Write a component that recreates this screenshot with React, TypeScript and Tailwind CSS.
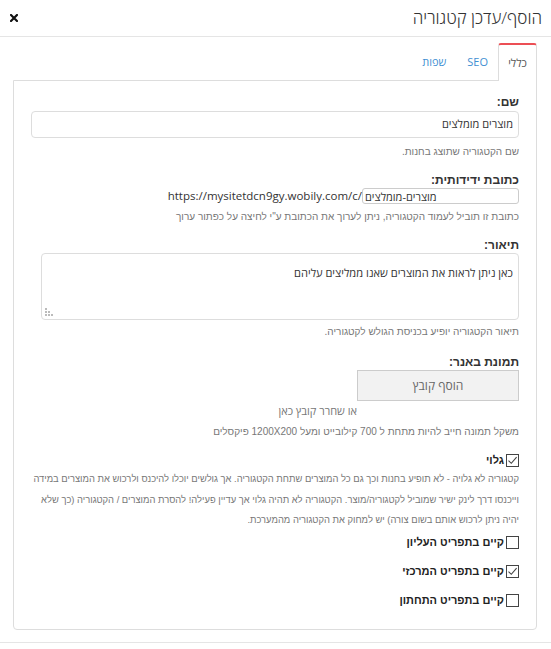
import React from "react"

const os = "font-['Open_Sans','Liberation_Sans',sans-serif]"
const ar = "font-['Liberation_Sans',Arial,sans-serif]"

function Box({ checked }: { checked?: boolean }) {
  return (
    <svg width="13" height="13" viewBox="0 0 13 13" className="shrink-0">
      <rect x="0.5" y="0.5" width="12" height="12" fill="#fff" stroke="#444" />
      {checked && <path d="M2.5 6.6 L5.3 9.3 L10.6 3.2" fill="none" stroke="#444" strokeWidth="1.1" />}
    </svg>
  )
}

function Label({ children, className = "" }: { children: React.ReactNode; className?: string }) {
  return <div className={`${ar} text-[12px] leading-[16px] font-bold text-[#333] ${className}`}>{children}</div>
}

function Help({ children, className = "" }: { children: React.ReactNode; className?: string }) {
  return <div className={`${ar} text-[10px] leading-[14px] text-[#777] whitespace-nowrap ${className}`}>{children}</div>
}

function MenuCheck({ label, checked, className = "" }: { label: string; checked?: boolean; className?: string }) {
  return (
    <div className={`flex items-center gap-[2px] h-[16px] ${className}`}>
      <Box checked={checked} />
      <span className={`${ar} text-[11px] font-bold text-[#222]`}>{label}</span>
    </div>
  )
}

export default function App() {
  return (
    <div dir="rtl" className="w-[551px] h-[649px] bg-white flex flex-col overflow-hidden">
      {/* Header */}
      <div className="h-[37px] flex items-center justify-between pr-[9px] pl-[10px] border-b border-[#e5e5e5]">
        <h4 className={`${os} text-[17px] font-light text-[#333] leading-none pb-[2px]`}>הוסף/עדכן קטגוריה</h4>
        <button className="w-[8px] h-[8px] flex items-center justify-center">
          <svg width="8" height="8" viewBox="0 0 8 8">
            <path d="M1 1 L7 7 M7 1 L1 7" stroke="#111" strokeWidth="2.2" strokeLinecap="square" />
          </svg>
        </button>
      </div>

      <div className="pr-[14px] pl-[13px] pt-[6px]">
        {/* Tabs */}
        <div className="flex h-[38px] relative z-10">
          <div className="w-[39px] h-[38px] bg-white border-t-2 border-t-[#ec4f55] border-x border-[#ddd] rounded-t-[3px] flex items-center justify-center">
            <span className={`${os} text-[11px] text-[#555]`}>כללי</span>
          </div>
          <div className="px-[10px] flex items-center">
            <span className={`${os} text-[11px] text-[#3f8fd2]`}>SEO</span>
          </div>
          <div className="px-[11px] flex items-center">
            <span className={`${os} text-[11px] text-[#3f8fd2]`}>שפות</span>
          </div>
        </div>

        {/* Panel */}
        <div className="border border-[#ddd] rounded-b-[4px] -mt-px h-[550px] pr-[17px] pl-[17px] pt-[13px]">
          <Label>שם:</Label>
          <div className="mt-[1px] h-[27px] border border-[#ddd] rounded-[4px] flex items-center pr-[5px]">
            <span className={`${os} text-[11px] text-[#333]`}>מוצרים מומלצים</span>
          </div>
          <Help className="mt-[7px]">שם הקטגוריה שתוצג בחנות.</Help>

          <Label className="mt-[13px]">כתובת ידידותית:</Label>
          <div className="flex items-center h-[16px]">
            <div dir="ltr" className="w-[157px] h-[16px] border border-[#ccc] rounded-[3px] flex items-center pl-[2px]">
              <span dir="rtl" className={`${os} text-[11px] text-[#333] leading-none`}>מוצרים-מומלצים</span>
            </div>
            <span dir="ltr" className={`${os} text-[11.5px] text-[#333] leading-none`}>https://mysitetdcn9gy.wobily.com/c/</span>
          </div>
          <Help className="mt-[6px]">כתובת זו תוביל לעמוד הקטגוריה, ניתן לערוך את הכתובת ע"י לחיצה על כפתור ערוך</Help>

          <Label className="mt-[13px]">תיאור:</Label>
          <div className="relative w-[478px] h-[67px] border border-[#ddd] rounded-[4px] pr-[5px] pt-[5px]">
            <span className={`${os} text-[11.1px] text-[#333]`}>כאן ניתן לראות את המוצרים שאנו ממליצים עליהם</span>
            <svg width="8" height="8" viewBox="0 0 8 8" className="absolute left-[3px] bottom-[3px]">
              <rect x="0" y="0" width="2" height="2" fill="#bbb" />
              <rect x="0" y="3" width="2" height="2" fill="#bbb" />
              <rect x="3" y="3" width="2" height="2" fill="#bbb" />
              <rect x="0" y="6" width="2" height="2" fill="#bbb" />
              <rect x="3" y="6" width="2" height="2" fill="#bbb" />
              <rect x="6" y="6" width="2" height="2" fill="#bbb" />
            </svg>
          </div>
          <Help className="mt-[5px]">תיאור הקטגוריה יופיע בכניסת הגולש לקטגוריה.</Help>

          <Label className="mt-[15px]">תמונת באנר:</Label>
          <div className="w-[162px] h-[31px] bg-[#f2f2f2] border border-[#ccc] flex items-center justify-center">
            <span className={`${os} text-[12px] text-[#666]`}>הוסף קובץ</span>
          </div>
          <div className={`${os} text-[11px] leading-[16px] text-[#777] mt-[2px] mr-[162px]`}>או שחרר קובץ כאן</div>
          <Help className="mt-[6px]">משקל תמונה חייב להיות מתחת ל 700 קילובייט ומעל 1200X200 פיקסלים</Help>

          <MenuCheck className="mt-[13px]" label="גלוי" checked />
          <div className={`${ar} text-[9.4px] leading-[20.5px] text-[#777] mt-[1px] whitespace-nowrap`}>
            קטגוריה לא גלויה - לא תופיע בחנות וכך גם כל המוצרים שתחת הקטגוריה. אך גולשים יוכלו להיכנס ולרכוש את המוצרים במידה
            <br />
            וייכנסו דרך לינק ישיר שמוביל לקטגוריה/מוצר. הקטגוריה לא תהיה גלוי אך עדיין פעילה! להסרת המוצרים / הקטגוריה (כך שלא
            <br />
            יהיה ניתן לרכוש אותם בשום צורה) יש למחוק את הקטגוריה מהמערכת.
          </div>

          <MenuCheck className="mt-[4px]" label="קיים בתפריט העליון" />
          <MenuCheck className="mt-[13px]" label="קיים בתפריט המרכזי" checked />
          <MenuCheck className="mt-[13px]" label="קיים בתפריט התחתון" />
        </div>
      </div>

      <div className="mt-[12px] border-t border-[#e5e5e5]" />
    </div>
  )
}
